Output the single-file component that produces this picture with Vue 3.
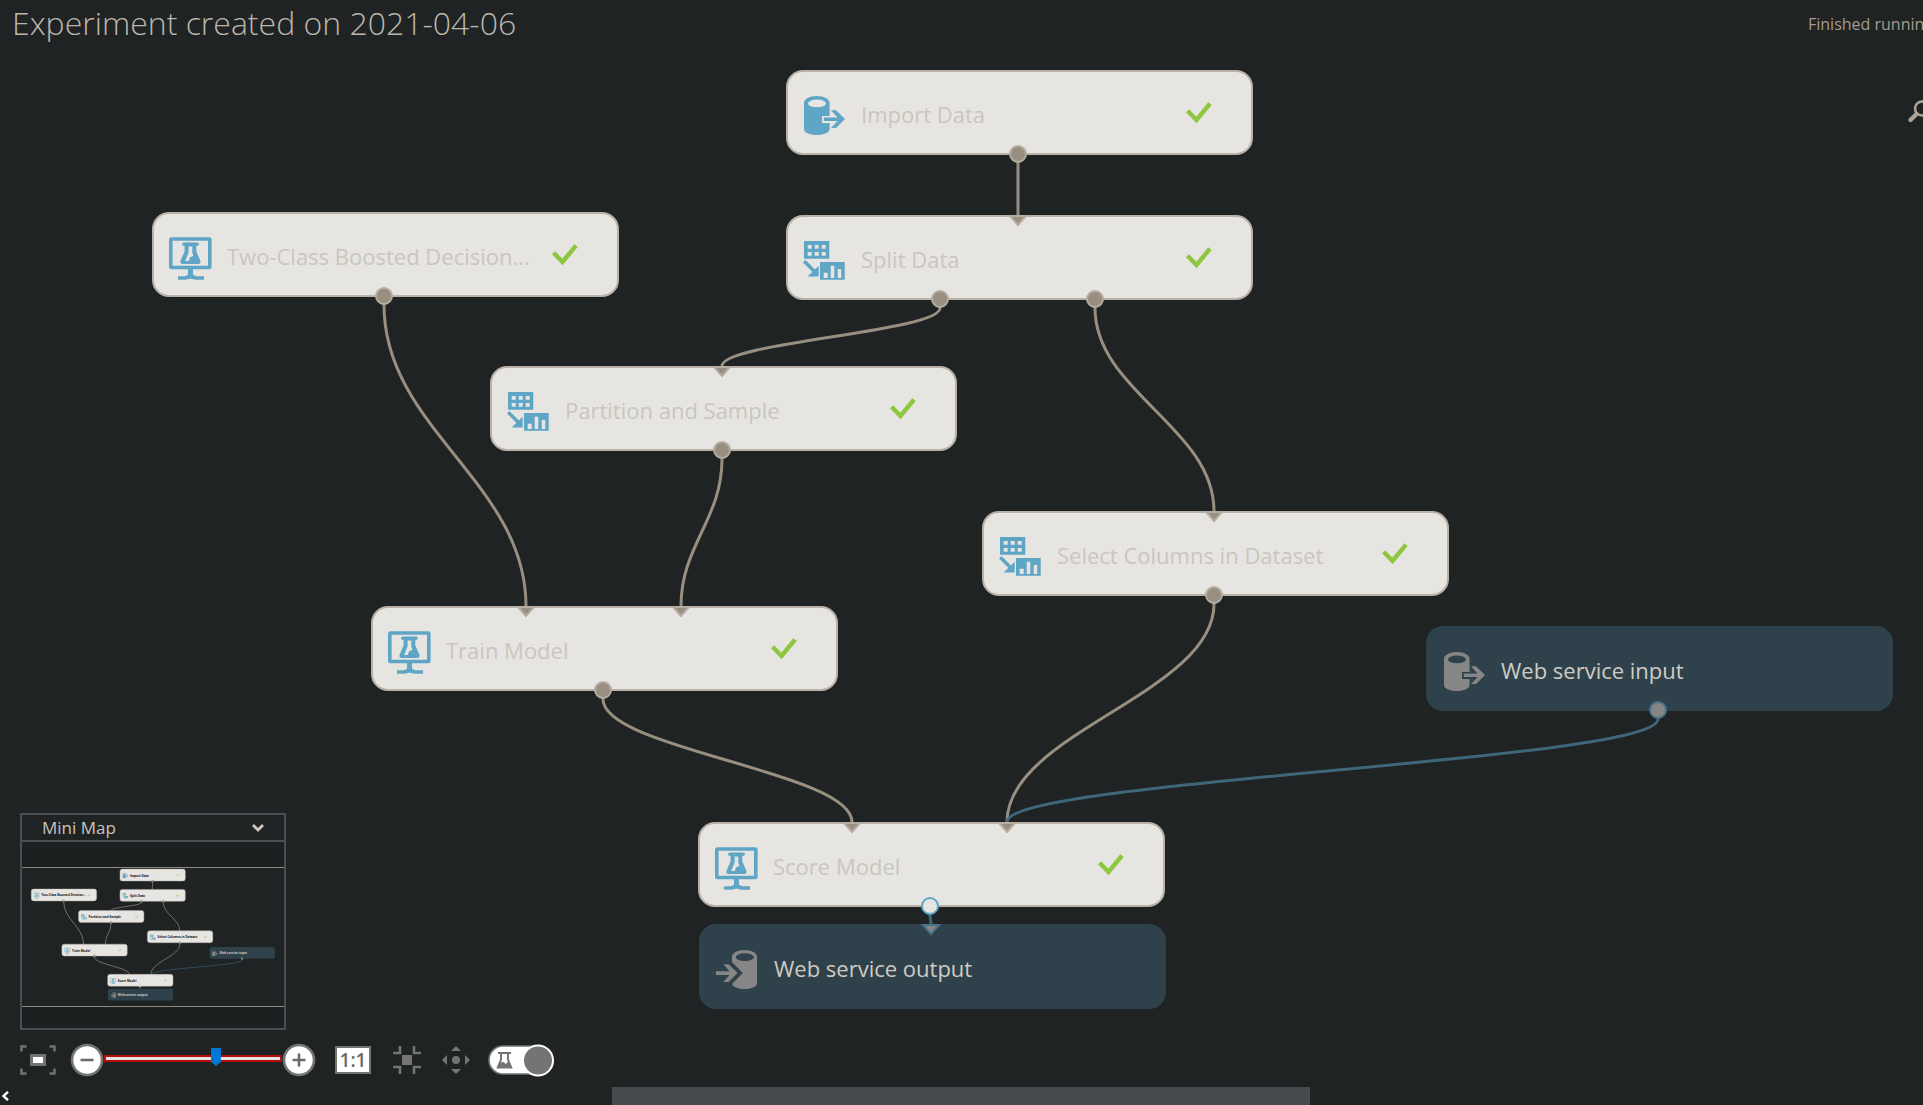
<script setup>
import { computed, ref } from 'vue'

const NODE_W = 467
const NODE_H = 85

const nodes = [
  { id: 'import', x: 786, y: 22, icon: 'import', label: 'Import Data', done: true, outs: [232] },
  { id: 'boosted', x: 152, y: 164, icon: 'model', label: 'Two-Class Boosted Decision...', done: true, outs: [232] },
  { id: 'split', x: 786, y: 167, icon: 'transform', label: 'Split Data', done: true, ins: [232], outs: [154, 309] },
  { id: 'partition', x: 490, y: 318, icon: 'transform', label: 'Partition and Sample', done: true, ins: [232], outs: [232] },
  { id: 'select', x: 982, y: 463, icon: 'transform', label: 'Select Columns in Dataset', done: true, ins: [232], outs: [232] },
  { id: 'train', x: 371, y: 558, icon: 'model', label: 'Train Model', done: true, ins: [155, 310], outs: [232] },
  { id: 'score', x: 698, y: 774, icon: 'model', label: 'Score Model', done: true, ins: [154, 309], outs: [232], open: true },
  { id: 'input', x: 1426, y: 578, icon: 'import', label: 'Web service input', service: true, outs: [232] },
  { id: 'output', x: 699, y: 876, icon: 'export', label: 'Web service output', service: true, ins: [232] },
]

const links = [
  ['import', 0, 'split', 0],
  ['boosted', 0, 'train', 0],
  ['split', 0, 'partition', 0],
  ['split', 1, 'select', 0],
  ['partition', 0, 'train', 1],
  ['train', 0, 'score', 0],
  ['select', 0, 'score', 1],
  ['input', 0, 'score', 1, true],
  ['score', 0, 'output', 0, true],
]

const byId = Object.fromEntries(nodes.map((n) => [n.id, n]))

const edges = links.map(([from, out, to, inn, service]) => {
  const a = byId[from]
  const b = byId[to]
  const x1 = a.x + a.outs[out]
  const y1 = a.y + 93
  const x2 = b.x + b.ins[inn]
  const y2 = b.y
  const k = (y2 - y1) * 0.41
  return { d: `M${x1} ${y1 - 6}V${y1}C${x1} ${y1 + k} ${x2} ${y2 - k} ${x2} ${y2}v2`, service }
})

const outPorts = nodes.flatMap((n) =>
  (n.outs || []).map((o) => ({ x: n.x + o, y: n.y + 84, kind: n.open ? 'open' : n.service ? 'service' : '' })),
)
const inPorts = nodes.flatMap((n) =>
  (n.ins || []).map((i) => ({ x: n.x + i, y: n.y + 1, kind: n.service ? 'service' : '' })),
)

const zoom = ref(64)
const mapOpen = ref(true)
const showLabels = ref(true)
const chevron = computed(() => (mapOpen.value ? 'M2 2l5 5l5-5' : 'M2 7l5-5l5 5'))
</script>

<template>
  <div class="designer">
    <svg class="defs" width="0" height="0" aria-hidden="true">
      <symbol id="i-model" viewBox="0 0 44 44">
        <rect x="1.8" y="2" width="39" height="28.5" rx="0.6" fill="none" stroke="currentColor" stroke-width="3.6" />
        <path d="M19 32h5v5.400c1 1.200 3 1.800 5 1.800h6v3.600H27c-2 0-4-.6-5.500-1.200c-1.500.6-3.500 1.200-5.500 1.200H9v-3.600h5c2 0 4-.6 5-1.800z" fill="currentColor" />
        <path fill-rule="evenodd" d="M13 7.200Q13 5.600 15 5.600H28Q30 5.600 30 7.200Q30 9 27.300 9V14.500L31.300 23.500Q32.300 27 29 27H14Q10.600 27 11.600 23.500L15.600 14.500V9Q13 9 13 7.200zM19.600 9.600V15.500L16.200 24H19.800L21 20.500L24.300 18.800L23.300 15.500V9.600z" fill="currentColor" />
      </symbol>
      <symbol id="i-import" viewBox="-1 -1 44 44">
        <path fill-rule="evenodd" d="M0 7C0 3 5.500 0 12.800 0S25.600 3 25.600 7V20H18V27H25.600V33C25.600 36.600 20 39 12.800 39S0 36.600 0 33zM4 7.400a9 3.900 0 1 0 18 0a9 3.900 0 1 0-18 0z" fill="currentColor" />
        <path d="M19.800 21.400H33.500L27 14.200H32L41 23L32 32H27L33.500 25H19.800z" fill="currentColor" />
      </symbol>
      <symbol id="i-export" viewBox="0 -1 44 44">
        <path fill-rule="evenodd" d="M16 7C16 3 21.500 0 28.600 0S41 3 41 7V33C41 36.600 36 39 28.600 39S16 36.600 16 33zM19.800 7.200a9 3.900 0 1 0 18 0a9 3.900 0 1 0-18 0z" fill="currentColor" />
        <path d="M13 12L24 23L13 34" fill="none" stroke="var(--card)" stroke-width="4" />
        <path d="M0 21.200H13.500L7.400 14.200H12.600L21.500 23L12.600 32H7.400L13.500 25H0z" fill="currentColor" />
      </symbol>
      <symbol id="i-transform" viewBox="0 0 44 44">
        <path fill-rule="evenodd" d="M1 1h25.300v17.700H1zM4.700 5v3.800h4V5zM11.700 5v3.800h4V5zM18.700 5v3.800h4V5zM4.700 12v3.800h4V12zM11.700 12v3.800h4V12zM18.700 12v3.800h4V12z" fill="currentColor" />
        <path fill-rule="evenodd" d="M17 22h24.700v17.700H17zM20.700 32.700v5.300h4v-5.300zM27.700 25.700V38h3.600V25.700zM34.700 29V38h3.600V29z" fill="currentColor" />
        <path d="M1.200 21.200L12 32" fill="none" stroke="currentColor" stroke-width="3.600" />
        <path d="M15.700 25.700V36.400H4.700z" fill="currentColor" />
      </symbol>
      <symbol id="i-check" viewBox="0 0 26 21">
        <path d="M1.600 8.800L10.500 18L24 1.600" fill="none" stroke="#8dc63f" stroke-width="4.400" />
      </symbol>
    </svg>

    <header class="top">
      <h1>Experiment created on 2021-04-06</h1>
      <p class="status">Finished running</p>
    </header>

    <main class="canvas">
      <article
        v-for="n in nodes"
        :key="n.id"
        class="node"
        :class="{ service: n.service }"
        :style="{ left: n.x + 'px', top: n.y + 'px' }"
      >
        <svg class="glyph" width="44" height="44" aria-hidden="true"><use :href="'#i-' + n.icon" /></svg>
        <span class="label">{{ n.label }}</span>
        <svg v-if="n.done" class="check" width="26" height="21" role="img" aria-label="Finished"><use href="#i-check" /></svg>
      </article>

      <svg class="wires" aria-hidden="true">
        <path v-for="e in edges" :key="e.d" :d="e.d" class="wire" :class="{ service: e.service }" />
        <path v-for="p in inPorts" :key="'i' + p.x + p.y" :d="`M${p.x - 8} ${p.y}h16l-8 9z`" class="port" :class="p.kind" />
        <circle v-for="p in outPorts" :key="'o' + p.x + p.y" :cx="p.x" :cy="p.y" r="8" class="port" :class="p.kind" />
      </svg>

      <button class="search" aria-label="Search">
        <svg width="26" height="26" viewBox="0 0 26 26" aria-hidden="true">
          <circle cx="15" cy="9.500" r="7" fill="none" stroke="#aca395" stroke-width="2.600" />
          <path d="M9.500 15L3.500 21" stroke="#aca395" stroke-width="4.400" stroke-linecap="round" />
        </svg>
      </button>

      <div class="dock">
        <section class="minimap">
          <button class="map-head" :aria-expanded="mapOpen" @click="mapOpen = !mapOpen">
            <span>Mini Map</span>
            <svg width="14" height="10" viewBox="0 0 14 10" aria-hidden="true">
              <path :d="chevron" fill="none" stroke="#cbc5bc" stroke-width="3" />
            </svg>
          </button>
          <div v-if="mapOpen" class="map-body">
            <svg class="map-view" viewBox="86 14 1872 986" aria-hidden="true">
              <path v-for="e in edges" :key="e.d" :d="e.d" class="mini-wire" :class="{ service: e.service }" />
              <g v-for="n in nodes" :key="n.id" class="mini" :class="{ service: n.service }">
                <rect :x="n.x" :y="n.y" :width="NODE_W" :height="NODE_H" rx="17" />
                <use :href="'#i-' + n.icon" :x="n.x + 17" :y="n.y + 25" width="44" height="44" />
                <text :x="n.x + 72" :y="n.y + 53">{{ n.label }}</text>
                <use v-if="n.done" href="#i-check" :x="n.x + 400" :y="n.y + 32" width="26" height="21" />
              </g>
              <circle v-for="p in outPorts" :key="'m' + p.x + p.y" :cx="p.x" :cy="p.y" r="8" class="port" :class="p.kind" />
            </svg>
          </div>
        </section>

        <div class="tools">
          <button class="tool fit" aria-label="Zoom to fit">
            <svg width="36" height="30" viewBox="0 0 36 30" aria-hidden="true">
              <path d="M1.500 6.500V1.500H6.500M29.500 1.500H34.500V6.500M34.500 23.500V28.500H29.500M6.500 28.500H1.500V23.500" fill="none" stroke="#747474" stroke-width="2.400" />
              <rect x="11.500" y="10.500" width="13" height="9" fill="#fff" stroke="#747474" stroke-width="3" />
            </svg>
          </button>
          <div class="zoom">
            <button class="tool" aria-label="Zoom out">
              <svg width="34" height="34" viewBox="0 0 34 34" aria-hidden="true">
                <circle cx="17" cy="17" r="15" fill="#fff" stroke="#747474" stroke-width="2.600" />
                <path d="M10.500 17h13" stroke="#6b6b6b" stroke-width="2.600" />
              </svg>
            </button>
            <input v-model="zoom" type="range" min="0" max="100" aria-label="Zoom level" />
            <button class="tool" aria-label="Zoom in">
              <svg width="34" height="34" viewBox="0 0 34 34" aria-hidden="true">
                <circle cx="17" cy="17" r="15" fill="#fff" stroke="#747474" stroke-width="2.600" />
                <path d="M10.500 17h13M17 10.500v13" stroke="#6b6b6b" stroke-width="2.600" />
              </svg>
            </button>
          </div>
          <button class="tool actual" aria-label="Actual size"><span>1:1</span></button>
          <button class="tool collapse" aria-label="Collapse">
            <svg width="28" height="28" viewBox="0 0 28 28" aria-hidden="true">
              <path d="M7 0V7H0M21 0V7H28M7 28V21H0M21 28V21H28" fill="none" stroke="#747474" stroke-width="2.600" />
              <rect x="9" y="9" width="10" height="10" fill="#747474" />
            </svg>
          </button>
          <button class="tool pan" aria-label="Pan">
            <svg width="28" height="28" viewBox="0 0 28 28" aria-hidden="true" fill="#747474">
              <circle cx="14" cy="14" r="4" />
              <path d="M14 0l5 5H9zM14 28l5-5H9zM0 14l5-5v10zM28 14l-5-5v10z" />
            </svg>
          </button>
          <label class="switch">
            <input v-model="showLabels" type="checkbox" role="switch" aria-label="Web service view" />
            <svg width="66" height="34" viewBox="0 0 66 34" aria-hidden="true">
              <rect x="1" y="3" width="64" height="28" rx="14" fill="#fff" stroke="#747474" stroke-width="1.600" />
              <circle cx="50" cy="17.500" r="15" fill="#747474" stroke="#fff" stroke-width="2" />
              <path d="M10 10H23M13 11V16.500L9.800 24.500H23.200L20 16.500V11" fill="none" stroke="#747474" stroke-width="2" />
              <path d="M12 19.500L15.500 19L18 21L20.500 18L22.800 24.500H10z" fill="#747474" />
            </svg>
          </label>
        </div>
      </div>
    </main>

    <footer class="scroll">
      <button class="scroll-left" aria-label="Scroll left">
        <svg width="10" height="10" viewBox="0 0 10 10" aria-hidden="true">
          <path d="M8 .8L3.500 5L8 9.200" fill="none" stroke="#fff" stroke-width="2.400" />
        </svg>
      </button>
      <div class="track"><div class="thumb"></div></div>
    </footer>
  </div>
</template>

<style>
body {
  margin: 0;
  background: #1f2324;
}
</style>

<style scoped>
.designer {
  display: flex;
  flex-direction: column;
  height: 100vh;
  overflow: hidden;
  background: #1f2324;
  color: #cbc5bc;
  font-family: 'Open Sans', 'Noto Sans', sans-serif;
}
.defs {
  position: absolute;
}
button {
  margin: 0;
  padding: 0;
  border: 0;
  background: none;
  color: inherit;
  font-family: inherit;
}
svg {
  display: block;
}
.top {
  display: flex;
  justify-content: space-between;
  align-items: flex-start;
  height: 48px;
  padding-left: 12px;
}
h1 {
  margin: 0;
  font-size: 32px;
  line-height: 46px;
  font-weight: 300;
  color: #bdb6ab;
}
.status {
  width: 115px;
  margin: 0;
  overflow: hidden;
  white-space: nowrap;
  font-size: 16px;
  line-height: 48px;
  color: #a59c8f;
}
.canvas {
  position: relative;
  flex: 1;
  min-height: 0;
}
.node {
  --card: #e7e5e1;
  position: absolute;
  box-sizing: border-box;
  display: flex;
  align-items: center;
  width: 467px;
  height: 85px;
  padding: 0 39px 0 15px;
  border: 2px solid #b9b1a7;
  border-radius: 17px;
  background: var(--card);
  color: #cac6bf;
}
.node.service {
  --card: #2f424b;
  border-color: var(--card);
  color: #d0cbc4;
}
.glyph {
  flex: none;
  margin: 8px 14px 0 0;
  color: #5fa5c5;
}
.service .glyph {
  color: #868686;
}
.label {
  flex: 1;
  margin-top: 2px;
  white-space: nowrap;
  font-size: 22px;
  line-height: 30px;
}
.check {
  flex: none;
}
.wires {
  position: absolute;
  inset: 0;
  width: 100%;
  height: 100%;
  pointer-events: none;
}
.wire {
  fill: none;
  stroke: #998f80;
  stroke-width: 3;
}
.wire.service {
  stroke: #3f677a;
}
.port {
  fill: #998f80;
  stroke: #b5ada2;
  stroke-width: 2;
}
.port.service {
  fill: #868686;
  stroke: #47738a;
}
.port.open {
  fill: #e7e5e1;
  stroke: #5fa5c5;
}
.search {
  position: absolute;
  top: 51px;
  right: -10px;
}
.dock {
  position: absolute;
  left: 20px;
  bottom: 10px;
  display: flex;
  flex-direction: column;
  gap: 13px;
}
.minimap {
  box-sizing: border-box;
  width: 266px;
  border: 2px solid #4a4e51;
}
.map-head {
  display: flex;
  justify-content: space-between;
  align-items: center;
  width: 100%;
  height: 25px;
  padding: 0 19px 0 20px;
  font-size: 17px;
  line-height: 25px;
}
.map-body {
  box-sizing: border-box;
  height: 188px;
  padding: 25px 0;
  border-top: 2px solid #4a4e51;
  background: #1c2021;
}
.map-view {
  box-sizing: border-box;
  width: 100%;
  height: 140px;
  border: solid #8f887f;
  border-width: 1px 0;
  background: #1f2324;
}
.mini {
  --card: #e7e5e1;
  color: #5fa5c5;
}
.mini.service {
  --card: #2f424b;
  color: #868686;
}
.mini rect {
  fill: var(--card);
  stroke: #b9b1a7;
  stroke-width: 3;
}
.mini.service rect {
  stroke: none;
}
.mini text {
  fill: #111;
  font-size: 22px;
  font-weight: 700;
}
.mini.service text {
  fill: #d0cbc4;
}
.mini-wire {
  fill: none;
  stroke: #857c70;
  stroke-width: 6;
}
.mini-wire.service {
  stroke: #34505e;
}
.tools {
  display: flex;
  align-items: center;
  gap: 14px;
}
.tool {
  display: flex;
  flex: none;
  align-items: center;
  justify-content: center;
}
.zoom {
  display: flex;
  align-items: center;
  width: 246px;
}
.zoom input {
  flex: 1;
  min-width: 0;
  height: 18px;
  margin: 0 0 3px;
  appearance: none;
  background: none;
}
.zoom input::-webkit-slider-runnable-track {
  height: 7px;
  box-sizing: border-box;
  border: 2px solid #b30d0d;
  background: #e4e2e2;
}
.zoom input::-webkit-slider-thumb {
  width: 10px;
  height: 18px;
  margin-top: -9px;
  appearance: none;
  background: #0078d7;
  clip-path: polygon(0 0, 100% 0, 100% 75%, 50% 100%, 0 75%);
}
.actual {
  width: 46px;
}
.actual span {
  box-sizing: border-box;
  width: 36px;
  height: 28px;
  border: 2px solid #747474;
  background: #fff;
  color: #6b6b6b;
  font-size: 19px;
  line-height: 24px;
  font-weight: 600;
}
.collapse {
  width: 34px;
}
.pan {
  width: 36px;
}
.switch input {
  position: absolute;
  width: 66px;
  height: 34px;
  margin: 0;
  opacity: 0;
}
.scroll {
  display: flex;
  align-items: center;
  height: 18px;
}
.scroll-left {
  width: 18px;
}
.track {
  flex: 1;
  height: 18px;
}
.thumb {
  width: 36.6%;
  height: 18px;
  margin-left: 31.2%;
  background: #464a4c;
}
</style>
